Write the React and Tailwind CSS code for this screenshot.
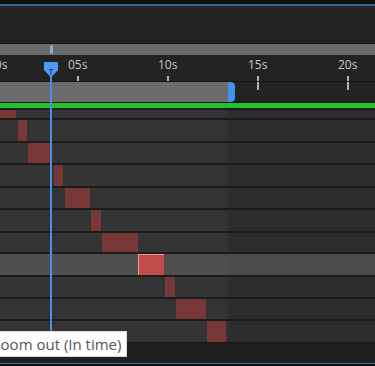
import React from "react";

const rows = [
  { h: "h-[10px]", start: 0, width: 16 },
  { h: "h-[23px]", start: 18, width: 9 },
  { h: "h-[22px]", start: 28, width: 24 },
  { h: "h-[23px]", start: 54, width: 9 },
  { h: "h-[22px]", start: 65, width: 25 },
  { h: "h-[23px]", start: 91, width: 10 },
  { h: "h-[21px]", start: 102, width: 36 },
  { h: "h-[23px]", start: 138, width: 26, active: true },
  { h: "h-[22px]", start: 165, width: 10 },
  { h: "h-[22px]", start: 176, width: 30 },
  { h: "h-[23px]", start: 207, width: 19 },
];

const labels = [
  { text: "00s", left: -12 },
  { text: "05s", left: 68 },
  { text: "10s", left: 158 },
  { text: "15s", left: 248 },
  { text: "20s", left: 338 },
];

function LayerRow({ row }) {
  return (
    <div className={`flex border-t-2 border-[#1b1b1b] ${row.h}`}>
      <div
        className={`flex w-[228px] ${
          row.active ? "bg-[#4f4f4f]" : "bg-[#343434]"
        }`}
      >
        <div
          className={
            row.active
              ? "h-full border-l border-t border-[#e49a9a] bg-[#c24b4b]"
              : "h-full bg-[#793838]"
          }
          style={{ marginLeft: row.start, width: row.width }}
        />
      </div>
      <div
        className={`flex-1 ${row.active ? "bg-[#4c4c4c]" : "bg-[#2d2d2d]"}`}
      />
    </div>
  );
}

export default function App() {
  return (
    <div
      className="relative h-[366px] w-[375px] overflow-hidden bg-[#0e0e0e]"
      style={{ fontFamily: '"Open Sans", "Noto Sans", sans-serif' }}
    >
      <div className="h-[4px] bg-[#0e0e0e]" />
      <div className="h-[2px] bg-[#3f6494]" />
      <div className="h-[37px] bg-[#232323]" />
      <div className="h-[1px] bg-[#141414]" />

      {/* scroll bar */}
      <div className="relative h-[11px] bg-[#6b6b6b]">
        <div className="absolute left-[50px] top-[1px] h-[9px] w-[3px] rounded-sm bg-[#8aaad6]" />
      </div>

      {/* time ruler */}
      <div className="relative h-[26px] bg-[#232323]">
        {labels.map((l) => (
          <span
            key={l.text}
            className="absolute top-[2px] text-[12px] leading-4 text-[#c9c9c9]"
            style={{ left: l.left }}
          >
            {l.text}
          </span>
        ))}
        {[78, 168, 258, 348].map((x) => (
          <div
            key={x}
            className="absolute top-[21px] h-[5px] w-[2px] bg-[#b4b4b4]"
            style={{ left: x - 1 }}
          />
        ))}
      </div>
      <div className="h-[1px] bg-[#141414]" />

      {/* work area */}
      <div className="flex h-[20px]">
        <div className="w-[228px] bg-[#6b6b6b]" />
        <div className="w-[7px] rounded-r-[4px] bg-[#3f92ee]" />
        <div className="relative flex-1 bg-[#232323]">
          {[258, 348].map((x) => (
            <div
              key={x}
              className="absolute top-0 h-[8px] w-[2px] bg-[#b4b4b4]"
              style={{ left: x - 1 - 235 }}
            />
          ))}
        </div>
      </div>
      <div className="h-[1px] bg-[#141414]" />
      <div className="h-[5px] bg-[#22c22a]" />

      {/* layers */}
      {rows.map((row, i) => (
        <LayerRow key={i} row={row} />
      ))}

      {/* bottom bar */}
      <div className="h-[21px] border-t-2 border-[#1b1b1b] bg-[#1f1f1f]" />
      <div className="h-[1px] bg-[#3a6ea8]" />

      {/* playhead */}
      <div className="absolute left-[50px] top-[76px] h-[255px] w-[2px] bg-[#4a8fe2]" />
      <svg
        className="absolute left-[44px] top-[62px]"
        width="14"
        height="16"
        viewBox="0 0 14 16"
      >
        <path d="M1 0 H13 Q14 0 14 1 V8 L7 15.5 L0 8 V1 Q0 0 1 0 Z" fill="#4a9cf2" />
        <path d="M5 7.5 H9 M7 7.5 V13" stroke="#1d3550" strokeWidth="1" />
      </svg>

      {/* tooltip */}
      <div className="absolute left-[-11px] top-[331px] flex h-[26px] w-[138px] items-center border border-[#d8d8d8] bg-white pl-[2px] pt-[1px] text-[15px] text-[#555555]">
        Zoom out (In time)
      </div>
    </div>
  );
}
